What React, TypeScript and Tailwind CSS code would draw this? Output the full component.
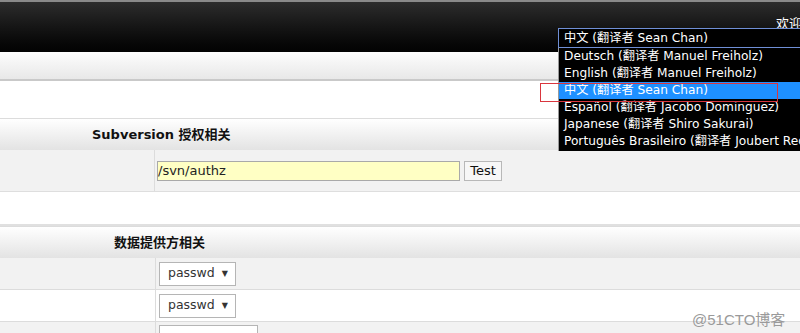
import React from 'react';

const font = { fontFamily: 'Tahoma, "DejaVu Sans", "Noto Sans CJK SC", sans-serif' };

const languages = [
  'Deutsch (翻译者 Manuel Freiholz)',
  'English (翻译者 Manuel Freiholz)',
  '中文 (翻译者 Sean Chan)',
  'Español (翻译者 Jacobo Dominguez)',
  'Japanese (翻译者 Shiro Sakurai)',
  'Português Brasileiro (翻译者 Joubert RedRat)',
];

function SectionHeader({ title, pad }: { title: string; pad: string }) {
  return (
    <div className="h-[32px] border-t border-[#dcdcdc] bg-gradient-to-b from-[#ffffff] to-[#e3e3e3] flex items-center">
      <span className={`${pad} text-[13px] font-bold text-[#111]`}>{title}</span>
    </div>
  );
}

function SelectBox() {
  return (
    <div className="w-[77px] h-[24px] border border-[#b5b5b5] bg-white flex items-center justify-between pl-[8px] pr-[7px] text-[12.5px] text-[#333]">
      <span>passwd</span>
      <span className="text-[8px]">▼</span>
    </div>
  );
}

export default function App() {
  return (
    <div className="relative w-[800px] h-[333px] overflow-hidden bg-white" style={font}>
      {/* Header */}
      <div className="h-[52px] border-t-2 border-[#8a8a8a] bg-gradient-to-b from-[#2d2d2d] to-[#030303] flex justify-end">
        <span className="pt-[12px] text-[13px] text-white whitespace-nowrap -mr-[2px]">欢迎</span>
      </div>

      {/* Sub bar */}
      <div className="h-[29px] bg-gradient-to-b from-[#fdfdfd] to-[#e8e8e8] border-b-2 border-[#c9c9c9]" />

      <div className="h-[37px] bg-white" />

      <SectionHeader title="Subversion 授权相关" pad="pl-[92px]" />
      <div className="h-[42px] bg-[#f2f2f2] flex border-b border-[#dedede]">
        <div className="w-[155px] border-r border-[#dcdcdc]" />
        <div className="flex items-center gap-[4px] pl-[2px]">
          <div className="w-[303px] h-[20px] border border-[#a9a9a9] bg-[#ffffc4] flex items-center text-[13px] text-[#222]">
            /svn/authz
          </div>
          <div className="w-[38px] h-[20px] border border-[#b8b8b8] bg-[#f7f7f7] flex items-center justify-center text-[13px] text-[#111]">
            Test
          </div>
        </div>
      </div>

      <div className="h-[34px] bg-white border-b-2 border-[#e0e0e0]" />

      <SectionHeader title="数据提供方相关" pad="pl-[114px]" />
      <div className="h-[32px] bg-[#f2f2f2] flex border-b border-[#dcdcdc]">
        <div className="w-[156px] border-r border-[#dcdcdc]" />
        <div className="flex items-center pl-[3px]">
          <SelectBox />
        </div>
      </div>
      <div className="h-[32px] bg-white flex border-b border-[#dcdcdc]">
        <div className="w-[156px] border-r border-[#dcdcdc]" />
        <div className="flex items-center pl-[3px]">
          <SelectBox />
        </div>
      </div>
      <div className="h-[40px] bg-[#f2f2f2] flex">
        <div className="w-[156px] border-r border-[#dcdcdc]" />
        <div className="pl-[3px] pt-[3px]">
          <div className="w-[99px] h-[24px] border border-[#b5b5b5] bg-white" />
        </div>
      </div>

      {/* Language dropdown */}
      <div className="absolute left-[558px] top-[28px] w-[260px] text-[12.2px] text-white">
        <div className="h-[20px] border border-[#6f8fd6] bg-black flex items-center pl-[5px] whitespace-nowrap">
          中文 (翻译者 Sean Chan)
        </div>
        <div className="bg-black border-l border-[#999] pb-[1px]">
          {languages.map((lang, i) => (
            <div
              key={lang}
              className={`h-[17px] flex items-center pl-[5px] whitespace-nowrap ${i === 2 ? 'bg-[#1e90ff]' : ''}`}
            >
              {lang}
            </div>
          ))}
        </div>
      </div>

      {/* annotation */}
      <div className="absolute left-[540px] top-[83px] w-[238px] h-[19px] border border-[#d9363e]" />

      <div className="absolute left-[692px] top-[309px] text-[15px] text-[#9a9a9a]" style={{ fontFamily: '"Liberation Sans", "Noto Sans CJK SC", sans-serif' }}>
        @51CTO博客
      </div>
    </div>
  );
}
